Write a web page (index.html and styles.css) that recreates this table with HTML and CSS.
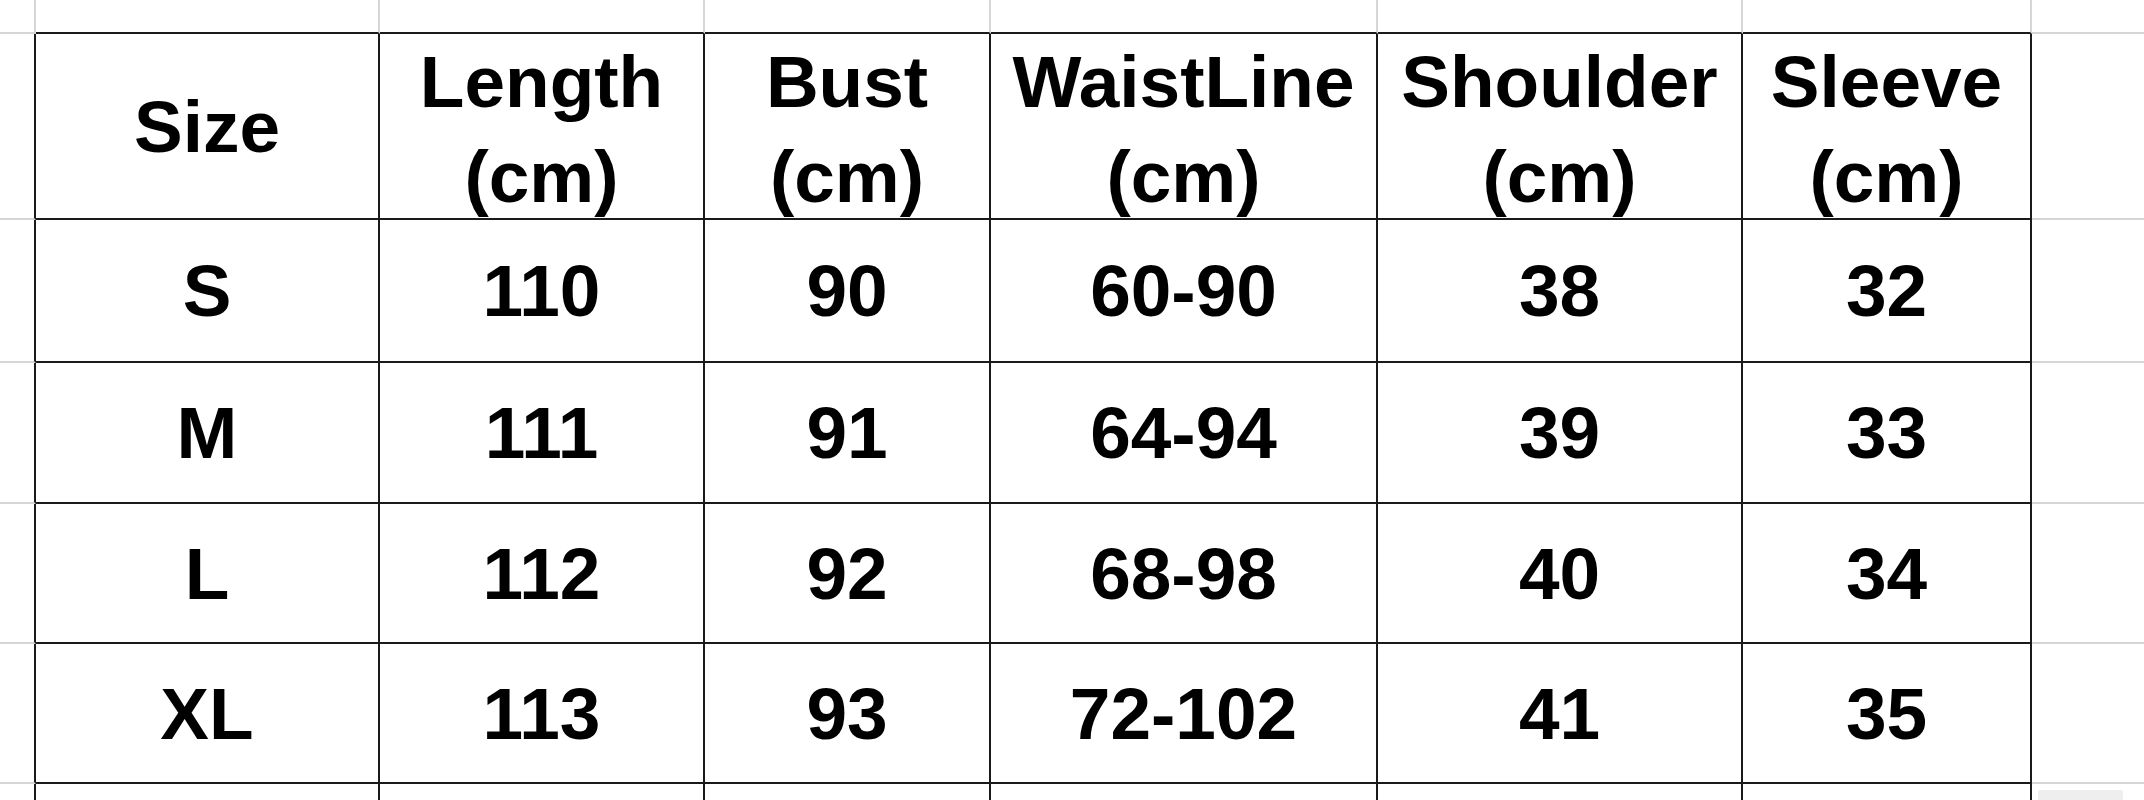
FILE: index.html
```html
<!DOCTYPE html>
<html>
<head>
<meta charset="utf-8">
<link rel="stylesheet" href="styles.css">
</head>
<body>
<div class="sheet">
  <!-- row 0 -->
  <div class="c"></div>
  <div class="c bt"></div>
  <div class="c bt"></div>
  <div class="c bt"></div>
  <div class="c bt"></div>
  <div class="c bt"></div>
  <div class="c bt"></div>
  <div class="c edge"></div>
  <!-- header -->
  <div class="c bl"></div>
  <div class="t h one"><span>Size</span></div>
  <div class="t h"><span>Length<br>(cm)</span></div>
  <div class="t h"><span>Bust<br>(cm)</span></div>
  <div class="t h"><span>WaistLine<br>(cm)</span></div>
  <div class="t h"><span>Shoulder<br>(cm)</span></div>
  <div class="t h"><span>Sleeve<br>(cm)</span></div>
  <div class="c edge"></div>
  <!-- S -->
  <div class="c bl"></div>
  <div class="t">S</div>
  <div class="t">110</div>
  <div class="t">90</div>
  <div class="t">60-90</div>
  <div class="t">38</div>
  <div class="t">32</div>
  <div class="c edge"></div>
  <!-- M -->
  <div class="c bl"></div>
  <div class="t">M</div>
  <div class="t">111</div>
  <div class="t">91</div>
  <div class="t">64-94</div>
  <div class="t">39</div>
  <div class="t">33</div>
  <div class="c edge"></div>
  <!-- L -->
  <div class="c bl"></div>
  <div class="t">L</div>
  <div class="t">112</div>
  <div class="t">92</div>
  <div class="t">68-98</div>
  <div class="t">40</div>
  <div class="t">34</div>
  <div class="c edge"></div>
  <!-- XL -->
  <div class="c bl"></div>
  <div class="t">XL</div>
  <div class="t">113</div>
  <div class="t">93</div>
  <div class="t">72-102</div>
  <div class="t">41</div>
  <div class="t">35</div>
  <div class="c edge"></div>
  <!-- partial row -->
  <div class="c bl last"></div>
  <div class="t last"></div>
  <div class="t last"></div>
  <div class="t last"></div>
  <div class="t last"></div>
  <div class="t last"></div>
  <div class="t last"></div>
  <div class="c edge last"><div class="chip"></div></div>
</div>
</body>
</html>
```

FILE: styles.css
```css
html, body {
  margin: 0;
  padding: 0;
  background: #ffffff;
}

.sheet {
  display: grid;
  grid-template-columns: 36px 344px 325px 286px 387px 365px 289px 1fr;
  grid-template-rows: 34px 186px 143px 141px 140px 140px 16px;
  width: 2144px;
  height: 800px;
  overflow: hidden;
  font-family: "Liberation Sans", Arial, sans-serif;
  font-weight: bold;
  font-size: 73px;
  color: #000;
}

.c, .t {
  box-sizing: border-box;
  border-right: 2px solid #d6d6d6;
  border-bottom: 2px solid #d6d6d6;
}

.c.edge {
  border-right: none;
}

.c.bl {
  border-right-color: #1a1a1a;
}

.c.bt {
  border-bottom-color: #1a1a1a;
}

.t {
  border-right-color: #1a1a1a;
  border-bottom-color: #1a1a1a;
  display: flex;
  align-items: center;
  justify-content: center;
  text-align: center;
  line-height: 95px;
  white-space: nowrap;
}

.t.h {
  align-items: flex-start;
}

.t.h.one {
  align-items: center;
}

.last {
  border-bottom: none;
}

.chip {
  margin: 6px 0 0 6px;
  width: 85px;
  height: 20px;
  background: #eeeeee;
  border-radius: 2px;
}
```
